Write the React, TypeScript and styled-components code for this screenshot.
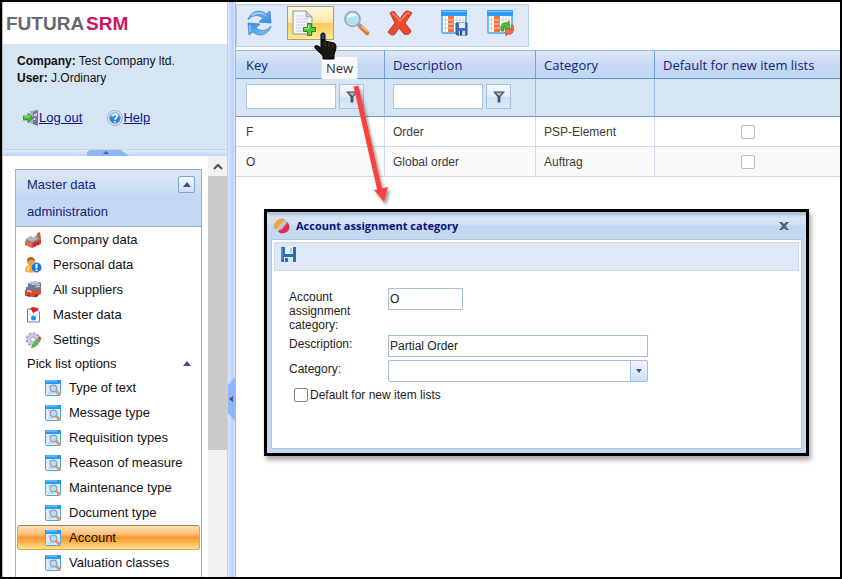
import React from "react";
import styled, { createGlobalStyle } from "styled-components";

const ARIAL = `"Liberation Sans", Arial, sans-serif`;
const HUMANIST = `"Open Sans", "Noto Sans", sans-serif`;

const GlobalStyle = createGlobalStyle`
  *, *::before, *::after { box-sizing: border-box; }
  body { margin: 0; background: #fff; color: #222; font: 13px/16px ${ARIAL}; }
  button, input, select { font: inherit; color: inherit; margin: 0; }
  svg { display: block; flex: none; }
`;

/* ---------- shell ---------- */

const Frame = styled.div`
  position: relative;
  display: grid;
  grid-template-columns: 225px 9px minmax(0, 1fr);
  height: 100vh;
  border: 2px solid #000;
  overflow: hidden;
`;

const Sidebar = styled.aside`
  display: flex;
  flex-direction: column;
  min-height: 0;
  border-left: 1px solid #bdbdbd;
`;

const Brand = styled.h1`
  margin: 0;
  padding: 12px 3px 10px;
  font: bold 19px/20px ${ARIAL};
  color: #66696d;
  display: flex;
  gap: 2px;
`;

const BrandAccent = styled.span`
  color: #cf1459;
`;

const Account = styled.section`
  height: 105px;
  padding: 9px 14px;
  background: #d6e5f3;
  font-size: 12px;
  line-height: 17px;
  color: #111;
`;

const AccountLine = styled.div``;

const AccountLinks = styled.nav`
  display: flex;
  gap: 25px;
  margin-top: 22px;
  padding-left: 6px;
`;

const TextLink = styled.a`
  display: inline-flex;
  align-items: center;
  color: #12128c;
  font-size: 13px;
  line-height: 18px;
`;

const HorizontalSplitter = styled.div`
  display: flex;
  justify-content: center;
  height: 7px;
  padding-right: 14px;
  border-top: 1px solid #c9d3de;
  background: linear-gradient(#e3eefd, #b9d3fa);
`;

const VerticalSplitter = styled.div`
  display: flex;
  align-items: flex-end;
  padding-bottom: 156px;
  border-left: 1px solid #c5cfdc;
  border-right: 1px solid #a9b8cd;
  background: linear-gradient(90deg, #d9e7fb, #b9d2fb 70%, #dce9fc);
`;

const NavArea = styled.div`
  display: flex;
  flex: 1;
  min-height: 0;
  overflow: hidden;
`;

const NavScroll = styled.div`
  flex: 1;
  min-width: 0;
  padding: 13px 6px 0 12px;
`;

const NavPanel = styled.nav`
  min-height: 100%;
  border: 1px solid #8fb0e0;
  border-bottom: 0;
`;

const NavHeader = styled.header`
  display: flex;
  justify-content: space-between;
  align-items: flex-start;
  padding: 1px 6px 1px 11px;
  border-bottom: 1px solid #8fb0e0;
  background: linear-gradient(#dce8f6, #c3d9f1 50%, #c3d9f1);
  color: #17217d;
  line-height: 27px;
`;

const NavTitle = styled.h2`
  margin: 0;
  width: 110px;
  font: inherit;
`;

const CollapseButton = styled.button`
  display: grid;
  place-items: center;
  width: 17px;
  height: 17px;
  margin-top: 5px;
  padding: 0;
  border: 1px solid #7ea2d2;
  border-radius: 2px;
  background: linear-gradient(#f4f8fd, #cfe0f5);
`;

const NavList = styled.ul`
  margin: 0;
  padding: 0 1px;
  list-style: none;
`;

const NavLink = styled.a<{ $level: 1 | 2; $selected?: boolean }>`
  display: flex;
  align-items: center;
  gap: ${(p) => (p.$level === 1 ? 11 : 8)}px;
  height: 25px;
  padding-left: ${(p) => (p.$level === 1 ? 7 : 27)}px;
  border: 1px solid ${(p) => (p.$selected ? "#dda544" : "transparent")};
  border-radius: 3px;
  border-top-color: ${(p) => (p.$selected ? "#97875c" : "transparent")};
  background: ${(p) =>
    p.$selected ? "linear-gradient(#fde0b5, #fcc27a 35%, #fa962f 50%, #fbb150 70%, #ffe58c)" : "none"};
  color: #111;
  text-decoration: none;
  white-space: nowrap;

  svg { width: ${(p) => (p.$level === 1 ? 17 : 16)}px; }
`;

const GroupToggle = styled.button`
  display: flex;
  justify-content: space-between;
  align-items: center;
  width: 100%;
  height: 23px;
  padding: 0 10px 0 11px;
  border: 0;
  background: none;
  color: #111;
`;

const ScrollTrack = styled.div`
  width: 19px;
  background: #f0f0f0;
`;

const ScrollUp = styled.button`
  display: grid;
  place-items: center;
  width: 100%;
  height: 20px;
  padding: 0;
  border: 0;
  background: #f0f0f0;
`;

const ScrollThumb = styled.div`
  height: 65%;
  background: #cbcbcb;
`;

/* ---------- main ---------- */

const Main = styled.main`
  min-width: 0;
  padding-top: 2px;
`;

const Toolbar = styled.div`
  display: flex;
  align-items: flex-start;
  width: 293px;
  height: 43px;
  padding: 1px 4px;
  border: 1px solid #bccfe8;
  background: #dfe8f6;
`;

const ToolButton = styled.button<{ $active?: boolean; $wide?: boolean }>`
  display: grid;
  place-items: center;
  width: ${(p) => (p.$wide ? 47 : 44)}px;
  height: 34px;
  padding: 0 ${(p) => (p.$active ? 13 : 0)}px 0 0;
  border: 1px solid ${(p) => (p.$active ? "#b59f69" : "transparent")};
  background: ${(p) =>
    p.$active ? "linear-gradient(#fff8dc, #ffe9a8 48%, #ffcb55 52%, #ffe79a)" : "none"};
`;

const ToolGroup = styled.div`
  display: flex;
  margin-right: 9px;
`;

const RefreshButton = styled(ToolButton)`
  width: 37px;
`;

const Grid = styled.table`
  width: 100%;
  margin-top: 3px;
  border-collapse: separate;
  border-spacing: 0;
  table-layout: fixed;
`;

const Col = styled.col<{ $width?: number }>`
  width: ${(p) => (p.$width ? `${p.$width}px` : "auto")};
`;

const HeadCell = styled.th`
  height: 29px;
  padding: 0 8px;
  border-top: 1px solid #9db9dc;
  border-right: 1px solid #769fd5;
  border-bottom: 1px solid #5f91d2;
  background: linear-gradient(#dce8f6, #c3d8f2 60%, #c3d8f2);
  color: #17217d;
  font: 13px/18px ${HUMANIST};
  text-align: left;
  white-space: nowrap;
  &:first-child { padding-left: 10px; }
  &:last-child { border-right: 0; }
`;

const FilterCell = styled.td`
  height: 38px;
  padding: 0 8px 2px;
  border-right: 1px solid #a0bce0;
  border-bottom: 1px solid #6f9bd6;
  background: #d6e5f3;
  &:first-child { padding-left: 10px; }
  &:last-child { border-right: 0; }
`;

const FilterBox = styled.div`
  display: flex;
  gap: 3px;
`;

const FilterInput = styled.input`
  width: 90px;
  height: 25px;
  padding: 0 4px;
  border: 1px solid #a7c3e8;
  background: #fff;
`;

const FilterButton = styled.button`
  display: grid;
  place-items: center;
  width: 25px;
  height: 25px;
  padding: 0;
  border: 1px solid #a4c0e6;
  background: linear-gradient(#f4f8fd, #e3edf9 50%, #d0e0f4 52%, #dce8f7);
`;

const BodyRow = styled.tr`
  &:nth-child(even) { background: #fafafa; }
`;

const BodyCell = styled.td<{ $center?: boolean }>`
  height: 30px;
  padding: 0 8px;
  border-right: 1px solid #d0dbed;
  border-bottom: 1px solid #d0dbed;
  color: #3a3a3a;
  font-size: 12px;
  text-align: ${(p) => (p.$center ? "center" : "left")};
  &:first-child { padding-left: 10px; }
  &:last-child { border-right: 0; }
`;

const Check = styled.input<{ $dark?: boolean }>`
  appearance: none;
  display: inline-block;
  flex: none;
  width: 14px;
  height: 14px;
  border: 1px solid ${(p) => (p.$dark ? "#80808c" : "#bbbbc3")};
  border-radius: 2px;
  background: #fff;
  vertical-align: middle;
`;

/* ---------- overlays ---------- */

const Tooltip = styled.div`
  position: absolute;
  left: 319px;
  top: 54px;
  padding: 3px 4px;
  border: 1px solid #dfe3ea;
  border-radius: 3px;
  background: #fafafc;
  color: #333;
  font: 13px/16px ${HUMANIST};
`;

const Pointer = styled.svg`
  position: absolute;
  left: 311px;
  top: 29px;
`;

const Arrow = styled.svg`
  position: absolute;
  left: 346px;
  top: 76px;
`;

const Dialog = styled.section`
  position: absolute;
  left: 262px;
  right: 31px;
  top: 207px;
  padding: 0 4px 4px;
  border: 3px solid #000;
  background: #c6d8ee;
  box-shadow: 2px 4px 5px rgba(0, 0, 0, 0.35);
`;

const DialogHeader = styled.header`
  display: flex;
  align-items: center;
  gap: 6px;
  height: 27px;
  margin: 0 -4px;
  padding: 0 17px 0 7px;
  background: linear-gradient(#a9bacf, #d6e4f4 20%, #d3e2f4 45%, #c3d8f1 50%, #c6d9f0);
`;

const DialogTitle = styled.h2`
  flex: 1;
  margin: 0;
  color: #07147a;
  font: bold 11px/18px ${HUMANIST};
`;

const CloseButton = styled.button`
  padding: 0;
  border: 0;
  background: none;
`;

const DialogBody = styled.div`
  padding: 2px 2px 0;
  border: 1px solid #b2c6df;
  background: #fff;
`;

const DialogToolbar = styled.div`
  display: flex;
  align-items: flex-start;
  height: 29px;
  padding: 4px 6px;
  border: 1px solid #ccdaed;
  background: #dfe8f6;
`;

const SaveButton = styled.button`
  padding: 0;
  border: 0;
  background: none;
`;

const Form = styled.form`
  display: grid;
  grid-template-columns: 84px 260px;
  column-gap: 15px;
  row-gap: 3px;
  padding: 17px 15px 43px;
  font-size: 12px;
  line-height: 14px;
`;

const Label = styled.label`
  padding-top: 2px;
`;

const TextField = styled.input<{ $short?: boolean }>`
  width: ${(p) => (p.$short ? "75px" : "100%")};
  height: 22px;
  padding: 0 1px;
  border: 1px solid #a6bfdb;
  background: #fff;
`;

const Picker = styled.div`
  display: grid;
  height: 22px;
`;

const PickerSelect = styled.select`
  grid-area: 1 / 1;
  appearance: none;
  width: 100%;
  height: 22px;
  padding: 0 22px 0 2px;
  border: 1px solid #a3bfe8;
  border-radius: 2px;
  background: #fff;
`;

const PickerArrow = styled.span`
  grid-area: 1 / 1;
  justify-self: end;
  display: grid;
  place-items: center;
  width: 18px;
  height: 22px;
  border: 1px solid #a3bfe8;
  border-radius: 0 2px 2px 0;
  background: linear-gradient(#f0f5fd, #cfdff5);
  pointer-events: none;
`;

const CheckLabel = styled.label`
  grid-column: 1 / -1;
  display: flex;
  align-items: center;
  gap: 2px;
  padding: 3px 5px;
`;

/* ---------- icons ---------- */

const UpTriangle = () => (
  <svg width="8" height="5" viewBox="0 0 8 5"><path d="M0 5 4 0l4 5z" fill="#3f5191" /></svg>
);

const LogoutIcon = () => (
  <svg width="16" height="16" viewBox="0 0 16 16">
    <path d="M7 1l8-1v15l-6-1-2-1z" fill="#a9abc8" />
    <path d="M10 2l5-2v16l-5-2z" fill="#74769d" />
    <path d="M11 4l3-1v3l-3 .6z" fill="#c8cbe2" />
    <circle cx="11.500" cy="9" r="1" fill="#e8e8f6" />
    <path d="M0 6h5V3l5 5-5 5v-3H0z" fill="#42b830" stroke="#267d1e" strokeWidth=".7" />
    <path d="M1 7h5V5" fill="none" stroke="#a2ec82" />
  </svg>
);

const HelpIcon = () => (
  <svg width="16" height="16" viewBox="0 0 16 16">
    <circle cx="8" cy="8" r="7.500" fill="#e0e7ef" stroke="#919fae" strokeWidth=".8" />
    <circle cx="8" cy="8" r="5.700" fill="#3388d7" />
    <path d="M3 7a5 5 0 0 1 10 0c-3-2-7-2-10 0z" fill="#8bc4f3" />
    <path d="M6 6.500a2 2 0 1 1 3 1.500c-1 .5-1 1-1 1.800" fill="none" stroke="#fff" strokeWidth="1.500" />
    <circle cx="8" cy="11.800" r=".9" fill="#fff" />
  </svg>
);

const FactoryIcon = () => (
  <svg width="17" height="16" viewBox="0 0 17 16">
    <path d="M12 1l3-1 1 8-4 2z" fill="#e4562e" />
    <path d="M1 7l5-3 2 2 4-3 1 3 3 0v5l-9 5-6-3z" fill="#83838b" />
    <path d="M1 7l5-3 1 2 4-2 2 3-6 3z" fill="#b6b6bc" />
    <path d="M0 9l7 2v5l-7-3z" fill="#f06a40" />
    <path d="M7 11l9-4v5l-9 4z" fill="#d9432a" />
    <path d="M9 12l2-1v2l-2 1zM12 10.500l2-1v2l-2 1z" fill="#7b2d25" />
  </svg>
);

const PersonIcon = () => (
  <svg width="17" height="16" viewBox="0 0 17 16">
    <path d="M0 14c0-4 2-6 6-6s6 2 6 6c-3 2-9 2-12 0z" fill="#f1a32b" />
    <path d="M1 13c1-3 2-4 4-4l-1 6z" fill="#ffd27b" />
    <circle cx="6" cy="4.500" r="4" fill="#eaa24a" />
    <path d="M2 5c-1-6 8-7 8 0-2-3-5-3-8 0z" fill="#ad621c" />
    <circle cx="11.500" cy="10.500" r="5" fill="#1774d7" stroke="#9bcafa" strokeWidth=".7" />
    <path d="M11.500 7v4.500M11.500 12.500v1.500" stroke="#fff" strokeWidth="2" />
  </svg>
);

const TruckIcon = () => (
  <svg width="18" height="17" viewBox="0 0 18 17">
    <path d="M3 2l7-2 7 1v10l-8 3-6-3z" fill="#6c7684" />
    <path d="M3 2l7-2 7 1-8 3z" fill="#b8bfca" />
    <path d="M1 6l5-1 4 1v8l-4 1-5-2z" fill="#4b83b9" />
    <path d="M0 9l6-1 3 2 7-2 1 5-6 4-11-2z" fill="#dc4a32" />
    <path d="M2 9l4 0 2 3-6-1z" fill="#f9a58a" />
    <circle cx="4" cy="15" r="1.300" fill="#444" /><circle cx="12" cy="15" r="1.500" fill="#444" />
    <path d="M11 4l5-1M11 6l5-1" stroke="#e4e7ee" />
  </svg>
);

const MasterIcon = () => (
  <svg width="16" height="16" viewBox="0 0 16 16">
    <path d="M2 2h9l3 3v10H2z" fill="#f8fbff" stroke="#6486b7" />
    <path d="M4 2l3-2 6 1-1 3-3 1-1 2-2-4z" fill="#d9262b" />
    <circle cx="8" cy="11" r="2.500" fill="#318ad9" />
    <path d="M4 8h2M10 8h2" stroke="#acc2dc" />
  </svg>
);

const GearIcon = () => (
  <svg width="16" height="16" viewBox="0 0 16 16">
    <circle cx="7.500" cy="7.500" r="6" fill="#c5c6de" stroke="#a3a4c2" strokeWidth="2.400" strokeDasharray="2.500 1.400" />
    <circle cx="7.500" cy="7.500" r="5.400" fill="#cccde3" />
    <circle cx="7.500" cy="7.500" r="2.400" fill="#fff" stroke="#9b9cbb" />
    <path d="M7 13l6-7 2 2-6 7-3 .6z" fill="#62be46" stroke="#348629" strokeWidth=".6" />
    <path d="M12.500 6l1.500-2 2 2-1.500 2z" fill="#e23f34" />
  </svg>
);

const PickIcon = () => (
  <svg width="16" height="16" viewBox="0 0 16 16">
    <rect x=".5" y=".5" width="15" height="15" rx="1" fill="#dcecfb" stroke="#48a6f2" />
    <path d="M0 0h16v4H0z" fill="#269af2" />
    <path d="M1 1h11" stroke="#8bd0ff" />
    <path d="M3 6h4M3 13h5" stroke="#b2c9df" />
    <path d="M11 11l4 4" stroke="#ed9550" strokeWidth="2.800" />
    <circle cx="8.500" cy="8.500" r="3.300" fill="#b9ddf6" stroke="#8ba0b6" strokeWidth="1.200" />
  </svg>
);

const syncArrow = "M2 10C4 2 13-2 20 4l4-3 1 12-12-1 4-4C12 4 6 5 2 10z";

const RefreshIcon = () => (
  <svg width="27" height="26" viewBox="0 0 27 26">
    <defs>
      <linearGradient id="sync" x1="0" y1="0" x2="1" y2="1">
        <stop stopColor="#8ccaf5" /><stop offset="1" stopColor="#3389d8" />
      </linearGradient>
    </defs>
    <path d={syncArrow} fill="url(#sync)" stroke="#3f86c8" strokeWidth=".8" />
    <path d={syncArrow} fill="url(#sync)" stroke="#3f86c8" strokeWidth=".8" transform="rotate(180 13.500 13)" />
    <path d="M6 6c4-4 10-4 14-.5M4 22v-7" fill="none" stroke="#b8e0fb" />
  </svg>
);

const NewIcon = () => (
  <svg width="26" height="26" viewBox="0 0 26 26">
    <path d="M2 1h13l6 6v17H2z" fill="#f3f5fa" stroke="#8c98ac" />
    <path d="M15 1v6h6z" fill="#c7cfdd" stroke="#8c98ac" strokeWidth=".8" />
    <path d="M5 6h7M5 9h12M5 12h13M5 15h9M5 18h7M5 21h7" stroke="#c6cddb" strokeWidth="1.200" />
    <path d="M16.500 13.500h4v4h4v4h-4v4h-4v-4h-4v-4h4z" fill="#57ca3a" stroke="#238823" />
    <path d="M17.500 15v3.500h-4" stroke="#b7f29c" fill="none" />
  </svg>
);

const SearchIcon = () => (
  <svg width="27" height="26" viewBox="0 0 27 26">
    <path d="M17 16l7 7" stroke="#e07a2c" strokeWidth="4.500" strokeLinecap="round" />
    <path d="M18 16l6 5" stroke="#ffc078" strokeWidth="1.600" strokeLinecap="round" />
    <path d="M14 13l4 4" stroke="#9b9ba3" strokeWidth="3" />
    <circle cx="9.500" cy="9" r="7.500" fill="#b4e1fa" stroke="#94a6b8" strokeWidth="1.600" />
    <path d="M4 8c1-5 8-6 10-2-4 0-7 1-10 2z" fill="#ecf9ff" />
  </svg>
);

const DeleteIcon = () => (
  <svg width="26" height="26" viewBox="0 0 26 26">
    <path
      d="M3 3c2-2 5-2 6 1l4 5 4-6c2-3 5-2 8 0l-7 10c2 3 5 6 6 8-1 4-5 4-7 3l-5-6-4 6c-2 2-5 1-7-2L8 13z"
      fill="#ea4a30" stroke="#bf2d1e" strokeWidth=".9" strokeLinejoin="round"
    />
    <path d="M5 4c1-1 2 0 3 1l5 6 6-7c1-1 3-1 4 0" fill="none" stroke="#fb8b6c" strokeWidth="1.400" />
  </svg>
);

const TableArt = () => (
  <>
    <rect x="1" y="1" width="24" height="22" rx="1" fill="#fff" stroke="#48a0ea" strokeWidth="1.500" />
    <path d="M0 1q0-1 1-1h24q1 0 1 1v5H0z" fill="#2f9bf0" />
    <path d="M1 1.500h24" stroke="#7cc6fb" />
    <path d="M7 6h6v16H7z" fill="#f47340" />
    <path d="M2 10h22M2 14h22M2 18h22M4.500 6v16M16 6v16M19 6v16M22 6v16" stroke="#bcc8e0" strokeWidth=".8" />
    <path d="M7 10h6M7 14h6M7 18h6" stroke="#ffae88" />
  </>
);

const TableSaveIcon = () => (
  <svg width="27" height="26" viewBox="0 0 27 26">
    <TableArt />
    <path d="M15 13h11v12H16l-1-1z" fill="#3f74bb" stroke="#2b578f" />
    <path d="M18 13h6v5h-6z" fill="#e7eef8" /><path d="M18 21h6v4h-6z" fill="#c9d6e8" />
    <path d="M19 21h2v4h-2z" fill="#274975" />
  </svg>
);

const TableResetIcon = () => (
  <svg width="27" height="26" viewBox="0 0 27 26">
    <TableArt />
    <path d="M14 21c-1-6 2-9 6-8l2-2 1 8-7-1 2-2c-2 0-2 2-1 5z" fill="#4fbf3c" stroke="#278326" strokeWidth=".7" />
    <path d="M26 15c2 6-1 10-5 9l-2 2-1-7 7 0-2 2c2-1 2-3 1-6z" fill="#f2703c" stroke="#c9482a" strokeWidth=".7" />
  </svg>
);

const FunnelIcon = () => (
  <svg width="12" height="12" viewBox="0 0 13 12">
    <path d="M0 0h13L8 6v6H5V6z" fill="#4d5258" />
    <path d="M3 1.500h7L7 5z" fill="#b9c2cc" />
  </svg>
);

const AppIcon = () => (
  <svg width="16" height="16" viewBox="0 0 16 16">
    <path d="M0 9C0 3 5-1 11 1L4 11c-2 1-4 0-4-2z" fill="#efa43d" />
    <path d="M2 11L11 1l2 3-8 9z" fill="#c7c4c7" />
    <path d="M4 13c3-1 6-5 9-9 4 3 3 10-3 11-3 1-5 0-6-2z" fill="#d92f54" />
    <path d="M7 12l6-7" stroke="#f38c9f" />
  </svg>
);

const SaveIcon = () => (
  <svg width="15" height="15" viewBox="0 0 15 15">
    <path d="M0 0h15v15H1l-1-1z" fill="#286eb8" />
    <path d="M4 0h8v7H4z" fill="#e7eef6" /><path d="M9 1h2v5H9z" fill="#bccbdc" />
    <path d="M3 10h9v5H3z" fill="#d6e4f3" /><path d="M4 11h3v4H4z" fill="#286eb8" />
    <path d="M1 1v12" stroke="#67a9e6" />
  </svg>
);

const CloseIcon = () => (
  <svg width="10" height="10" viewBox="0 0 10 10">
    <path d="M0 1h3l2 2 2-2h3L6.500 5 10 9H7L5 7 3 9H0l3.500-4z" fill="#4f5a6b" />
  </svg>
);

/* ---------- data ---------- */

const mainItems = [
  { label: "Company data", Icon: FactoryIcon },
  { label: "Personal data", Icon: PersonIcon },
  { label: "All suppliers", Icon: TruckIcon },
  { label: "Master data", Icon: MasterIcon },
  { label: "Settings", Icon: GearIcon },
];

const pickLists = [
  "Type of text", "Message type", "Requisition types", "Reason of measure",
  "Maintenance type", "Document type", "Account", "Valuation classes",
];

const rows = [
  { key: "F", description: "Order", category: "PSP-Element" },
  { key: "O", description: "Global order", category: "Auftrag" },
];

const ColumnFilter = ({ label }: { label: string }) => (
  <FilterBox>
    <FilterInput aria-label={`Filter ${label}`} />
    <FilterButton aria-label={`Filter options for ${label}`}><FunnelIcon /></FilterButton>
  </FilterBox>
);

export default function App() {
  return (
    <>
      <GlobalStyle />
      <Frame>
        <Sidebar>
          <Brand>FUTURA<BrandAccent>SRM</BrandAccent></Brand>
          <Account>
            <AccountLine><b>Company:</b> Test Company ltd.</AccountLine>
            <AccountLine><b>User:</b> J.Ordinary</AccountLine>
            <AccountLinks>
              <TextLink href="#logout"><LogoutIcon />Log out</TextLink>
              <TextLink href="#help"><HelpIcon />Help</TextLink>
            </AccountLinks>
          </Account>
          <HorizontalSplitter>
            <svg width="42" height="6" viewBox="0 0 42 6">
              <path d="M0 6V2l3-2h31l8 6z" fill="#8fb4fa" />
              <path d="M16 4l3-3 3 3z" fill="#555f70" />
            </svg>
          </HorizontalSplitter>
          <NavArea>
            <NavScroll>
              <NavPanel aria-label="Master data administration">
                <NavHeader>
                  <NavTitle>Master data administration</NavTitle>
                  <CollapseButton aria-label="Collapse"><UpTriangle /></CollapseButton>
                </NavHeader>
                <NavList>
                  {mainItems.map(({ label, Icon }) => (
                    <li key={label}>
                      <NavLink href="#" $level={1}><Icon />{label}</NavLink>
                    </li>
                  ))}
                </NavList>
                <GroupToggle aria-expanded="true">Pick list options<UpTriangle /></GroupToggle>
                <NavList>
                  {pickLists.map((label) => (
                    <li key={label}>
                      <NavLink href="#" $level={2} $selected={label === "Account"}><PickIcon />{label}</NavLink>
                    </li>
                  ))}
                </NavList>
              </NavPanel>
            </NavScroll>
            <ScrollTrack>
              <ScrollUp aria-label="Scroll up">
                <svg width="10" height="7" viewBox="0 0 10 7"><path d="M1 6l4-4 4 4" fill="none" stroke="#505050" strokeWidth="2" /></svg>
              </ScrollUp>
              <ScrollThumb />
            </ScrollTrack>
          </NavArea>
        </Sidebar>

        <VerticalSplitter>
          <svg width="7" height="44" viewBox="0 0 7 44">
            <path d="M0 8L7 0v44l-7-8z" fill="#8fb4fa" />
            <path d="M5 19v6l-4-3z" fill="#46506b" />
          </svg>
        </VerticalSplitter>

        <Main>
          <Toolbar role="toolbar">
            <ToolGroup>
              <RefreshButton aria-label="Refresh"><RefreshIcon /></RefreshButton>
            </ToolGroup>
            <ToolGroup>
              <ToolButton $active $wide aria-label="New"><NewIcon /></ToolButton>
              <ToolButton aria-label="Search"><SearchIcon /></ToolButton>
              <ToolButton aria-label="Delete"><DeleteIcon /></ToolButton>
            </ToolGroup>
            <ToolButton $wide aria-label="Save layout"><TableSaveIcon /></ToolButton>
            <ToolButton $wide aria-label="Reset layout"><TableResetIcon /></ToolButton>
          </Toolbar>
          <Grid>
            <colgroup><Col $width={149} /><Col $width={151} /><Col $width={119} /><Col /></colgroup>
            <thead>
              <tr>
                <HeadCell>Key</HeadCell>
                <HeadCell>Description</HeadCell>
                <HeadCell>Category</HeadCell>
                <HeadCell>Default for new item lists</HeadCell>
              </tr>
              <tr>
                <FilterCell><ColumnFilter label="Key" /></FilterCell>
                <FilterCell><ColumnFilter label="Description" /></FilterCell>
                <FilterCell />
                <FilterCell />
              </tr>
            </thead>
            <tbody>
              {rows.map((r) => (
                <BodyRow key={r.key}>
                  <BodyCell>{r.key}</BodyCell>
                  <BodyCell>{r.description}</BodyCell>
                  <BodyCell>{r.category}</BodyCell>
                  <BodyCell $center>
                    <Check type="checkbox" aria-label={`Default for new item lists: ${r.description}`} />
                  </BodyCell>
                </BodyRow>
              ))}
            </tbody>
          </Grid>
        </Main>

        <Tooltip role="tooltip">New</Tooltip>
        <Pointer width="24" height="29" viewBox="0 0 24 29" aria-hidden="true">
          <path d="M8 3c2-2 4-1 4 1v6l9 2c2 1 2 3 2 5l-2 7v4H10v-3c-2-3-6-5-8-8-1-2 1-3 3-2l3 2z" fill="#1c1510" stroke="#000" />
          <path d="M10 3v5" stroke="#163f9e" strokeWidth="3" />
          <path d="M12 11v4M16 12v4M20 13v3" stroke="#5a4838" strokeWidth=".8" />
        </Pointer>

        <Dialog role="dialog" aria-labelledby="dialog-title">
          <DialogHeader>
            <AppIcon />
            <DialogTitle id="dialog-title">Account assignment category</DialogTitle>
            <CloseButton aria-label="Close"><CloseIcon /></CloseButton>
          </DialogHeader>
          <DialogBody>
            <DialogToolbar><SaveButton aria-label="Save"><SaveIcon /></SaveButton></DialogToolbar>
            <Form>
              <Label htmlFor="code">Account assignment category:</Label>
              <TextField $short id="code" defaultValue="O" />
              <Label htmlFor="description">Description:</Label>
              <TextField id="description" defaultValue="Partial Order" />
              <Label htmlFor="category">Category:</Label>
              <Picker>
                <PickerSelect id="category" defaultValue=""><option value="" /></PickerSelect>
                <PickerArrow>
                  <svg width="6" height="4" viewBox="0 0 6 4"><path d="M0 0h6L3 4z" fill="#3f5191" /></svg>
                </PickerArrow>
              </Picker>
              <CheckLabel><Check $dark type="checkbox" />Default for new item lists</CheckLabel>
            </Form>
          </DialogBody>
        </Dialog>

        <Arrow width="50" height="132" viewBox="0 0 50 132" aria-hidden="true">
          <defs>
            <filter id="soft" x="-50%" y="-10%" width="200%" height="120%">
              <feDropShadow dx="2" dy="3" stdDeviation="1.500" floodOpacity=".4" />
            </filter>
          </defs>
          <g filter="url(#soft)" fill="#f94343">
            <path d="M8 8L32 113" stroke="#f94343" strokeWidth="5" />
            <path d="M26 112l14-3-4 15z" />
          </g>
        </Arrow>
      </Frame>
    </>
  );
}
